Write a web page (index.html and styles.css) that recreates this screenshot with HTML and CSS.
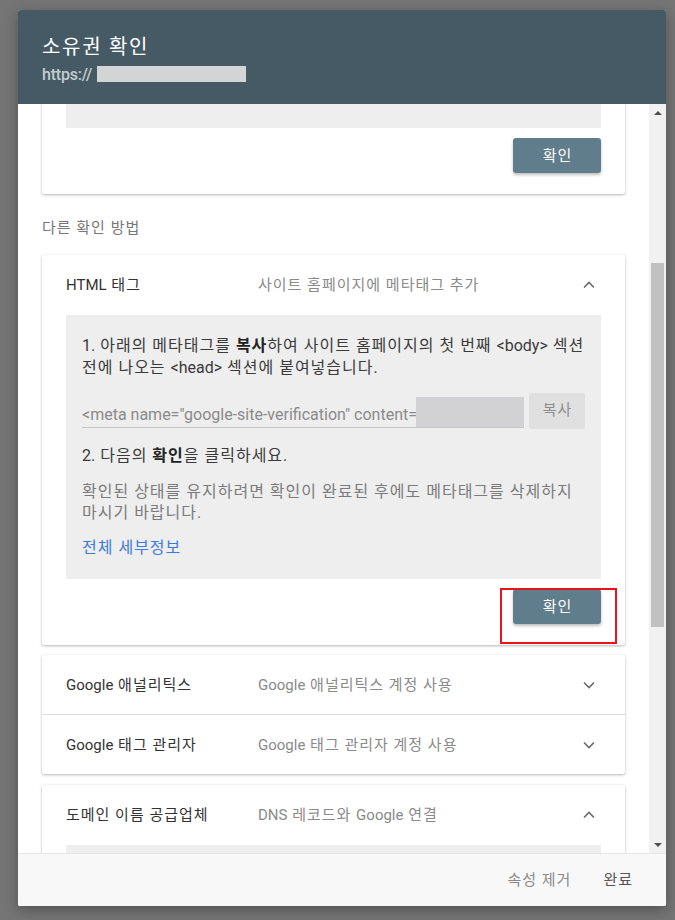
FILE: index.html
```html
<!DOCTYPE html>
<html lang="ko">
<head>
<meta charset="utf-8">
<title>소유권 확인</title>
<link rel="stylesheet" href="styles.css">
</head>
<body>
<div class="dialog">
  <header class="dialog-header">
    <h1 class="dialog-title">소유권 확인</h1>
    <div class="dialog-url"><span>https://</span><span class="redact-url"></span></div>
  </header>

  <div class="dialog-body">
    <div class="scroll-content">
      <div class="scroll-inner">
        <section class="card card-first">
          <div class="gray-box gray-box-tall"></div>
          <div class="button-row">
            <button class="btn-primary">확인</button>
          </div>
        </section>

        <div class="section-label">다른 확인 방법</div>

        <section class="card">
          <div class="method-row">
            <span class="method-name"><span class="lat">HTML</span> 태그</span>
            <span class="method-desc">사이트 홈페이지에 메타태그 추가</span>
            <svg class="chevron" viewBox="0 0 24 24" width="24" height="24"><polyline points="7,14.5 12,9.5 17,14.5" /></svg>
          </div>
          <div class="gray-box">
            <p class="step"><span class="lat">1.</span> 아래의 메타태그를 <b>복사</b>하여 사이트 홈페이지의 첫 번째 <span class="lat">&lt;body&gt;</span> 섹션<br>전에 나오는 <span class="lat">&lt;head&gt;</span> 섹션에 붙여넣습니다.</p>
            <div class="copy-row">
              <div class="meta-field">
                <span class="meta-text">&lt;meta name="google-site-verification" content=</span>
                <span class="redact-meta"></span>
              </div>
              <button class="btn-copy">복사</button>
            </div>
            <p class="step step-two"><span class="lat">2.</span> 다음의 <b>확인</b>을 클릭하세요.</p>
            <p class="note">확인된 상태를 유지하려면 확인이 완료된 후에도 메타태그를 삭제하지<br>마시기 바랍니다.</p>
            <a class="details-link" href="#">전체 세부정보</a>
          </div>
          <div class="button-row">
            <div class="highlight-wrap">
              <button class="btn-primary">확인</button>
              <span class="highlight-box"></span>
            </div>
          </div>
        </section>

        <section class="card card-group">
          <div class="method-row">
            <span class="method-name"><span class="lat">Google</span> 애널리틱스</span>
            <span class="method-desc"><span class="lat">Google</span> 애널리틱스 계정 사용</span>
            <svg class="chevron" viewBox="0 0 24 24" width="24" height="24"><polyline points="7,9.5 12,14.5 17,9.5" /></svg>
          </div>
          <div class="method-row row-divided">
            <span class="method-name"><span class="lat">Google</span> 태그 관리자</span>
            <span class="method-desc"><span class="lat">Google</span> 태그 관리자 계정 사용</span>
            <svg class="chevron" viewBox="0 0 24 24" width="24" height="24"><polyline points="7,9.5 12,14.5 17,9.5" /></svg>
          </div>
        </section>

        <section class="card card-last">
          <div class="method-row">
            <span class="method-name">도메인 이름 공급업체</span>
            <span class="method-desc"><span class="lat">DNS</span> 레코드와 <span class="lat">Google</span> 연결</span>
            <svg class="chevron" viewBox="0 0 24 24" width="24" height="24"><polyline points="7,14.5 12,9.5 17,14.5" /></svg>
          </div>
          <div class="gray-box gray-box-tall"></div>
        </section>
      </div>
    </div>

    <div class="scrollbar">
      <div class="sb-arrow"><span class="tri-up"></span></div>
      <div class="sb-track"><div class="sb-thumb"></div></div>
      <div class="sb-arrow"><span class="tri-down"></span></div>
    </div>
  </div>

  <footer class="dialog-footer">
    <button class="btn-text btn-muted">속성 제거</button>
    <button class="btn-text">완료</button>
  </footer>
</div>
</body>
</html>
```

FILE: styles.css
```css
* { box-sizing: border-box; }

html, body {
  margin: 0;
  height: 920px;
  overflow: hidden;
}

body {
  background: #757575;
  padding: 10px 9px 14px 18px;
  font-family: Roboto, "Noto Sans CJK KR", sans-serif;
  color: #333;
  letter-spacing: 1px;
}

.lat {
  letter-spacing: 0;
}

.dialog {
  width: 648px;
  height: 896px;
  background: #fff;
  border-radius: 2px;
  overflow: hidden;
  display: flex;
  flex-direction: column;
  box-shadow: 0 4px 14px rgba(0, 0, 0, 0.3);
}

/* header */
.dialog-header {
  height: 94px;
  flex: none;
  background: #465a65;
  padding: 23px 24px 0;
}

.dialog-title {
  margin: 0 0 3px;
  font-size: 20px;
  line-height: 28px;
  font-weight: 400;
  color: #fff;
  letter-spacing: 1.7px;
}

.dialog-url {
  display: flex;
  align-items: center;
  height: 20px;
  font-size: 16px;
  font-weight: 500;
  color: #c3ccd1;
  letter-spacing: -0.2px;
}

.redact-url {
  display: block;
  width: 149px;
  height: 16px;
  background: #d3d4d6;
  margin-left: 5px;
}

/* body */
.dialog-body {
  flex: 1;
  min-height: 0;
  display: flex;
}

.scroll-content {
  flex: 1;
  overflow: hidden;
  padding: 0 24px;
}

.scroll-inner {
  margin-top: -100px;
}

.card {
  background: #fff;
  border-radius: 2px;
  box-shadow: 0 1px 3px rgba(0, 0, 0, 0.28), 0 0 1px rgba(0, 0, 0, 0.08);
  padding: 0 24px 21px;
}

.card-first {
  padding-top: 24px;
}

.card-group {
  margin-top: 10px;
  padding: 0;
}

.card-last {
  margin-top: 11px;
}

.gray-box {
  background: #eeeeee;
  padding: 20px 16px 20px;
}

.gray-box-tall {
  height: 100px;
}

.button-row {
  display: flex;
  justify-content: flex-end;
  margin-top: 9px;
}

.card .gray-box + .button-row {
  margin-top: 10px;
}

.btn-primary {
  width: 88px;
  height: 35px;
  border: none;
  border-radius: 3px;
  background: #607d8b;
  color: #fff;
  font-family: inherit;
  font-size: 15px;
  line-height: 20px;
  letter-spacing: 1px;
  padding: 0 0 0 1px;
  box-shadow: 0 2px 3px rgba(0, 0, 0, 0.25);
}

.section-label {
  margin: 24px 0 17px;
  font-size: 15px;
  line-height: 20px;
  color: #777;
}

.method-row {
  display: grid;
  grid-template-columns: 192px 1fr 24px;
  align-items: center;
  height: 60px;
  font-size: 15px;
  line-height: 20px;
}

.card-group .method-row {
  height: 59px;
  padding: 0 24px;
}

.card-group .row-divided {
  height: 60px;
  border-top: 1px solid #e0e0e0;
}

.method-name {
  color: #333;
}

.method-desc {
  color: #8a8a8a;
}

.chevron {
  display: block;
}

.chevron polyline {
  fill: none;
  stroke: #6b6b6b;
  stroke-width: 1.6;
}

.step {
  margin: 0;
  font-size: 16px;
  line-height: 22px;
  color: #3a3a3a;
  white-space: nowrap;
}

.step b {
  font-weight: 700;
  color: #222;
}

.copy-row {
  display: flex;
  gap: 5px;
  height: 36px;
  margin-top: 14px;
}

.meta-field {
  flex: 1;
  position: relative;
  height: 35px;
  padding-top: 12px;
  border-bottom: 1px solid #c6c6c6;
  overflow: hidden;
  white-space: nowrap;
}

.meta-text {
  display: block;
  font-size: 16px;
  line-height: 20px;
  color: #8a8a8a;
  letter-spacing: 0;
}

.redact-meta {
  position: absolute;
  right: 0;
  top: 4px;
  width: 108px;
  height: 32px;
  background: #d2d2d4;
}

.btn-copy {
  width: 56px;
  height: 36px;
  border: none;
  border-radius: 2px;
  background: #e0e0e0;
  color: #8d8d8d;
  font-family: inherit;
  font-size: 15px;
  line-height: 20px;
  letter-spacing: 1px;
  padding: 0 0 3px 1px;
}

.step-two {
  margin-top: 16px;
}

.note {
  margin: 14px 0 0;
  font-size: 16px;
  line-height: 21px;
  color: #7b7b7b;
  white-space: nowrap;
}

.details-link {
  display: block;
  margin-top: 14px;
  font-size: 16px;
  line-height: 22px;
  color: #3d7ae0;
  text-decoration: none;
}

.highlight-wrap {
  position: relative;
}

.highlight-box {
  position: absolute;
  left: -13px;
  top: -1px;
  width: 117px;
  height: 56px;
  border: 2px solid #e8141b;
  pointer-events: none;
}

/* scrollbar */
.scrollbar {
  width: 17px;
  flex: none;
  background: #f1f1f1;
  display: flex;
  flex-direction: column;
}

.sb-arrow {
  height: 17px;
  display: flex;
  align-items: center;
  justify-content: center;
}

.tri-up, .tri-down {
  width: 0;
  height: 0;
  border-left: 4px solid transparent;
  border-right: 4px solid transparent;
}

.tri-up {
  border-bottom: 4px solid #505050;
}

.tri-down {
  border-top: 4px solid #505050;
}

.sb-track {
  flex: 1;
  padding: 0 2px;
}

.sb-thumb {
  margin-top: 142px;
  height: 364px;
  background: #c1c1c1;
}

/* footer */
.dialog-footer {
  height: 53px;
  flex: none;
  background: #f8f8f8;
  border-top: 1px solid #e6e6e6;
  display: flex;
  justify-content: flex-end;
  align-items: center;
  gap: 32px;
  padding: 0 33px 0 0;
}

.btn-text {
  border: none;
  background: none;
  padding: 0;
  font-family: inherit;
  font-size: 15px;
  line-height: 20px;
  letter-spacing: 1px;
  color: #555;
}

.btn-muted {
  color: #8a8a8a;
}
```
